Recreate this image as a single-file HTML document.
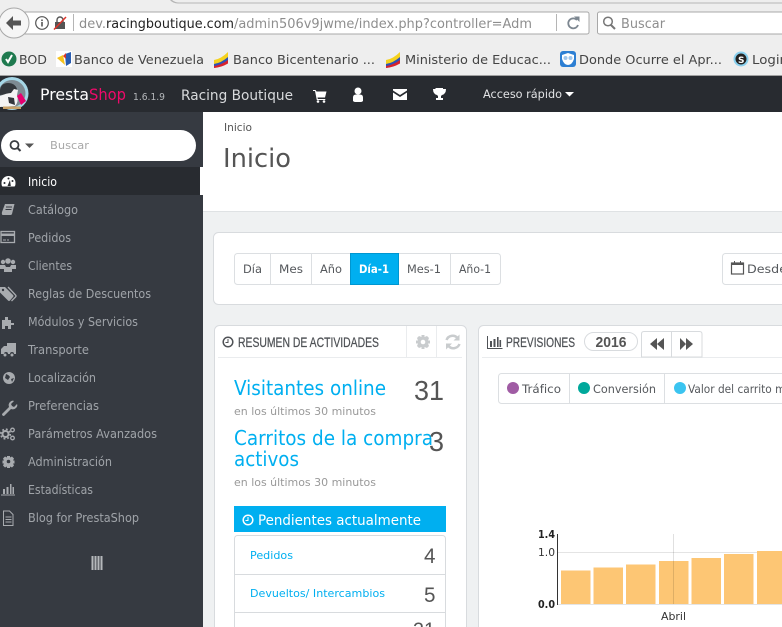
<!DOCTYPE html>
<html lang="es"><head><meta charset="utf-8"><title>Racing Boutique</title>
<style>
html,body{margin:0;padding:0;background:#eff1f2;width:782px;height:627px;overflow:hidden}
svg{display:block}
text{font-family:"DejaVu Sans",sans-serif;white-space:pre}
.m{font-size:12px;fill:#a0a4a9}
.b{font-size:11.5px;fill:#55585c}
.g{font-size:11px;fill:#999}
.h{font-family:"Liberation Sans",sans-serif;font-size:14px;fill:#4f5256;stroke:#4f5256;stroke-width:.25px}
.n{font-family:"Liberation Sans",sans-serif;fill:#555}
.bl{fill:#00aff0}
.i{fill:#a8abaf}
</style></head><body>
<svg width="782" height="627" viewBox="0 0 782 627" xmlns="http://www.w3.org/2000/svg">
<!-- browser chrome -->
<rect width="782" height="76" fill="#eeeeee"/>
<path d="M172 0q3 2.500 7 2.500H782v1H178q-5 0-8-3.500z" fill="#b5b5b5"/>
<rect x="20" y="12" width="569" height="22" rx="2" fill="#fff" stroke="#a8a8a8"/>
<circle cx="14" cy="23" r="15" fill="#f6f6f6" stroke="#a8a8a8"/>
<path d="M6 23l7-7v4.500h8v5h-8v4.500z" fill="#555"/>
<circle cx="42" cy="23" r="6.300" fill="none" stroke="#555" stroke-width="1.200"/><rect x="41.200" y="22" width="1.600" height="4.500" fill="#555"/><rect x="41.200" y="19.500" width="1.600" height="1.600" fill="#555"/>
<rect x="55" y="22" width="10" height="7" fill="#555"/><path d="M57 22v-2a3 3 0 0 1 6 0v2" fill="none" stroke="#555" stroke-width="1.400"/><path d="M54 29.500L66 17" stroke="#e0352b" stroke-width="1.500"/>
<rect x="73" y="14" width="1" height="17" fill="#b5b5b5"/>
<text x="79" y="28" font-size="13.500" fill="#8e8e8e" textLength="27" lengthAdjust="spacingAndGlyphs">dev.</text>
<text x="106" y="28" font-size="13.500" fill="#222" textLength="128" lengthAdjust="spacingAndGlyphs">racingboutique.com</text>
<text x="234" y="28" font-size="13.500" fill="#8e8e8e" textLength="298" lengthAdjust="spacingAndGlyphs">/admin506v9jwme/index.php?controller=Adm</text>
<rect x="556" y="14" width="1" height="17" fill="#b5b5b5"/>
<path d="M577 20a5 5 0 1 0 1 5" fill="none" stroke="#7d8791" stroke-width="1.800"/><path d="M574 16.500h5.500v5.500z" fill="#7d8791"/>
<rect x="597.500" y="12" width="190" height="22" rx="2" fill="#fff" stroke="#a8a8a8"/>
<circle cx="608" cy="21.500" r="4.300" fill="none" stroke="#777" stroke-width="1.500"/><path d="M611 25l4 4" stroke="#777" stroke-width="2"/>
<text x="621" y="28" font-size="13.500" fill="#8e8e8e" textLength="44" lengthAdjust="spacingAndGlyphs">Buscar</text>
<!-- bookmarks -->
<circle cx="9" cy="59" r="7.500" fill="#1f7a4f"/><path d="M6 59l2 3 4-7" fill="none" stroke="#fff" stroke-width="2"/>
<text x="19" y="64" font-size="12.500" fill="#444" textLength="28" lengthAdjust="spacingAndGlyphs">BOD</text>
<rect x="56" y="51" width="16" height="16" fill="#fff"/><path d="M57 58l6-3 2 10z" fill="#f6c21c"/><path d="M65 54l6-2v11l-5 3z" fill="#2a5db0"/><path d="M63 56l3-3v6z" fill="#d9352b"/>
<text x="74" y="64" font-size="12.500" fill="#444" textLength="130" lengthAdjust="spacingAndGlyphs">Banco de Venezuela</text>
<g id="f"><path d="M214 60q7-1 14-8v5.500q-7 6-14 7.500z" fill="#f5d21e"/><path d="M214 64q7-1 14-7v4q-7 6-14 7z" fill="#2d52b8"/><path d="M214 66q7-1 14-6v3.500q-7 4-14 4.500z" fill="#d8222c"/></g>
<text x="233" y="64" font-size="12.500" fill="#444" textLength="142" lengthAdjust="spacingAndGlyphs">Banco Bicentenario ...</text>
<use href="#f" x="172"/>
<text x="405" y="64" font-size="12.500" fill="#444" textLength="146" lengthAdjust="spacingAndGlyphs">Ministerio de Educac...</text>
<rect x="560" y="51" width="16" height="16" rx="3" fill="#2d7fd3"/><path d="M562 55l6-2 6 2v4q-2 6-6 6t-6-6z" fill="#fff"/><circle cx="565.500" cy="58" r="2" fill="#9fc6ec"/><circle cx="570.500" cy="58" r="2" fill="#9fc6ec"/>
<text x="579" y="64" font-size="12.500" fill="#444" textLength="143" lengthAdjust="spacingAndGlyphs">Donde Ocurre el Apr...</text>
<circle cx="741" cy="59" r="7.500" fill="#8ad0ee"/><circle cx="741" cy="59" r="5.500" fill="#222"/><text x="738" y="63" font-size="9" font-weight="bold" fill="#fff">S</text>
<text x="752" y="64" font-size="12.500" fill="#444" textLength="36" lengthAdjust="spacingAndGlyphs">Login</text>
<rect y="75" width="782" height="1" fill="#a0a0a0"/>
<!-- header -->
<rect y="76" width="782" height="36" fill="#282b30"/>
<circle cx="12" cy="93.500" r="16.500" fill="#a5d6e6"/><circle cx="12" cy="93.500" r="13.500" fill="#7d8a92"/>
<path d="M0 90q1-7 8-7t9 6l-3 5-14 1z" fill="#33373c"/>
<path d="M0 96q7-3 11-3l3-4 4 1-1 5q2 7-2 11l-15 1z" fill="#f4f4f4"/><path d="M8 97l6 1 1 7-6-2z" fill="#33373c"/><path d="M17 96l4-3 5 8-5 4z" fill="#e6006f"/><rect x="3" y="106.500" width="18" height="2.500" fill="#c9a36a"/>
<text x="40" y="100" font-size="16" fill="#fff" textLength="49" lengthAdjust="spacingAndGlyphs">Presta</text>
<text x="89" y="100" font-size="16" fill="#ef0a6a" textLength="37" lengthAdjust="spacingAndGlyphs">Shop</text>
<text x="133" y="100" font-size="10" fill="#b5b8bb" textLength="32" lengthAdjust="spacingAndGlyphs">1.6.1.9</text>
<text x="181" y="100" font-size="14" fill="#d8dadc" textLength="112" lengthAdjust="spacingAndGlyphs">Racing Boutique</text>
<path d="M313 90h2.500l1 1.500h10l-1.500 6h-7.500l.3 1.500h7.500v1h-8.500l-1.800-9h-2z" fill="#fff"/><circle cx="318" cy="101.500" r="1.300" fill="#fff"/><circle cx="324" cy="101.500" r="1.300" fill="#fff"/>
<circle cx="358" cy="91" r="3.500" fill="#fff"/><path d="M353 101v-3.500q0-3 3-3h4q3 0 3 3v3.500q-1 1-2 1h-6q-1 0-2-1z" fill="#fff"/>
<path d="M393 89h14v1.500l-7 4.500-7-4.500zM393 92.500l7 4.500 7-4.500v7.500h-14z" fill="#fff"/>
<path d="M435 88h8v1h3q0 5-4 6l-1 1v2h2v2h-7v-2h2v-2l-1-1q-4-1-4-6h3z" fill="#fff"/>
<text x="483" y="98" font-size="11.500" fill="#e2e3e5" textLength="79" lengthAdjust="spacingAndGlyphs">Acceso rápido</text>
<path d="M565 92h9l-4.500 4.500z" fill="#fff"/>
<!-- content -->
<rect x="203" y="112" width="579" height="99" fill="#fff"/><rect x="203" y="211" width="579" height="1" fill="#dfe2e4"/>
<text x="224" y="131" font-size="11" fill="#555" textLength="28" lengthAdjust="spacingAndGlyphs">Inicio</text>
<text x="223" y="167" font-size="26" fill="#555" textLength="68" lengthAdjust="spacingAndGlyphs">Inicio</text>
<!-- sidebar -->
<rect y="112" width="203" height="515" fill="#363a41"/>
<rect x="1" y="130" width="195" height="31" rx="15.500" fill="#fff"/>
<circle cx="14.500" cy="145" r="4" fill="none" stroke="#3a3d42" stroke-width="1.800"/><path d="M17.500 148l3 3" stroke="#3a3d42" stroke-width="2"/>
<path d="M25 143.500h9l-4.500 4.500z" fill="#555"/>
<text x="50" y="149" font-size="11" fill="#a8a8a8" textLength="39" lengthAdjust="spacingAndGlyphs">Buscar</text>
<rect y="167" width="200" height="28" fill="#282b30"/><rect x="200" y="167" width="3" height="28" fill="#fff"/>
<text class="m" x="28" y="186" style="fill:#fff" textLength="29" lengthAdjust="spacingAndGlyphs">Inicio</text>
<text class="m" x="28" y="214" textLength="50" lengthAdjust="spacingAndGlyphs">Catálogo</text>
<text class="m" x="28" y="242" textLength="43" lengthAdjust="spacingAndGlyphs">Pedidos</text>
<text class="m" x="28" y="270" textLength="44" lengthAdjust="spacingAndGlyphs">Clientes</text>
<text class="m" x="28" y="298" textLength="123" lengthAdjust="spacingAndGlyphs">Reglas de Descuentos</text>
<text class="m" x="28" y="326" textLength="110" lengthAdjust="spacingAndGlyphs">Módulos y Servicios</text>
<text class="m" x="28" y="354" textLength="61" lengthAdjust="spacingAndGlyphs">Transporte</text>
<text class="m" x="28" y="382" textLength="68" lengthAdjust="spacingAndGlyphs">Localización</text>
<text class="m" x="28" y="410" textLength="71" lengthAdjust="spacingAndGlyphs">Preferencias</text>
<text class="m" x="28" y="438" textLength="129" lengthAdjust="spacingAndGlyphs">Parámetros Avanzados</text>
<text class="m" x="28" y="466" textLength="84" lengthAdjust="spacingAndGlyphs">Administración</text>
<text class="m" x="28" y="494" textLength="65" lengthAdjust="spacingAndGlyphs">Estadísticas</text>
<text class="m" x="28" y="522" textLength="111" lengthAdjust="spacingAndGlyphs">Blog for PrestaShop</text>
<!-- sidebar icons -->
<path d="M1.500 183a7 7 0 1 1 14 0q0 3-1 3.500h-12q-1-.5-1-3.500z" fill="#fff"/><path d="M7.500 186l2.500-6 .8 6z" fill="#282b30"/><circle cx="4.500" cy="183" r="1" fill="#282b30"/><circle cx="8.500" cy="178.500" r="1" fill="#282b30"/><circle cx="12.500" cy="181" r="1" fill="#282b30"/>
<path class="i" d="M5 204h9.500l-2.500 10q-.3 1-1.500 1h-8q-1-1-.5-3z"/><path d="M6 207h6M5.500 209.500h6" stroke="#363a41"/>
<rect x="1" y="231.500" width="13.500" height="11" fill="none" stroke="#a8abaf" stroke-width="1.300"/><rect x="1" y="233.500" width="14" height="2.500" fill="#a8abaf"/><path d="M3 240h3M7 240h2" stroke="#a8abaf"/>
<circle cx="8" cy="261" r="2.800" class="i"/><circle cx="3" cy="262" r="2.200" class="i"/><circle cx="13" cy="262" r="2.200" class="i"/><path class="i" d="M0 265h5l1 2h4l1-2h5v4h-4v3h-8v-3h-4z"/>
<path class="i" d="M0 287h5l8 8q1 1 0 2l-3 3.500q-1 1-2 0l-8-8z"/><path d="M8 287l7.500 8q1 1 0 2l-4 4" stroke="#a8abaf" fill="none" stroke-width="1.300"/><circle cx="3" cy="290" r="1.200" fill="#363a41"/>
<path class="i" d="M2 320h3v-3h3v3h3v3h3v2h-3v4h-3v-3h-3v3h-3z"/>
<path class="i" d="M1 349l3-3h3v-3h9v11h-2a2 2 0 0 0-4 0h-2a2 2 0 0 0-4 0h-3z"/><circle cx="5" cy="355" r="1.500" class="i"/><circle cx="12" cy="355" r="1.500" class="i"/>
<circle cx="9" cy="378" r="6" class="i"/><path d="M6 374q3 1 4 3l-2 3-3-2zM11 379l3-1-2 4z" fill="#363a41"/>
<path class="i" d="M2 414l7-7q-1-3 1-5t4-1l-3 3 1 2 2 1 3-3q1 2-1 4t-5 1l-7 7q-2 0-2-2z"/>
<circle cx="5.500" cy="434" r="3" fill="none" stroke="#a8abaf" stroke-width="2"/><circle cx="5.500" cy="434" r="4.800" fill="none" stroke="#a8abaf" stroke-width="1.600" stroke-dasharray="1.900 1.900"/>
<circle cx="12.500" cy="430" r="1.800" fill="none" stroke="#a8abaf" stroke-width="1.300"/><circle cx="12.500" cy="438" r="1.800" fill="none" stroke="#a8abaf" stroke-width="1.300"/>
<path class="i" d="M7 456h3v1.500l2-1 2 2-1 2h1.500v3H13l1 2-2 2-2-1v1.500H7v-1.500l-2 1-2-2 1-2H2.500v-3H4l-1-2 2-2 2 1z"/><circle cx="8.500" cy="461.500" r="1.800" fill="#363a41"/>
<path d="M1 495h14" stroke="#a8abaf"/><path d="M3 489v5h2v-5zM6.500 487v7h2v-7zM10 484v10h1.500v-10zM12.500 487v7h1.500v-7z" class="i"/>
<path d="M3.500 511h6l3.500 3.500v11h-9.500z" fill="none" stroke="#a8abaf"/><path d="M5.500 517h6M5.500 519.500h6M5.500 522h6" stroke="#a8abaf"/>
<path d="M92.500 556v14M95.500 556v14M98.500 556v14M101.500 556v14" stroke="#b5b8bb" stroke-width="2"/>
<!-- range panel -->
<rect x="213.500" y="232.500" width="580" height="72" rx="5" fill="#fff" stroke="#d8dbde"/>
<rect x="234.500" y="253.500" width="266" height="31" rx="3" fill="#fff" stroke="#dcdfe2"/>
<path d="M270.500 254v30M311.500 254v30M450.500 254v30" stroke="#dcdfe2"/>
<rect x="350.500" y="253.500" width="48" height="31" fill="#00aff0" stroke="#0096d0"/>
<text class="b" x="243" y="273" textLength="19" lengthAdjust="spacingAndGlyphs">Día</text>
<text class="b" x="279" y="273" textLength="24" lengthAdjust="spacingAndGlyphs">Mes</text>
<text class="b" x="320" y="273" textLength="22" lengthAdjust="spacingAndGlyphs">Año</text>
<text x="359" y="273" font-size="11.500" font-weight="bold" fill="#fff" textLength="30" lengthAdjust="spacingAndGlyphs">Día-1</text>
<text class="b" x="407" y="273" textLength="34" lengthAdjust="spacingAndGlyphs">Mes-1</text>
<text class="b" x="459" y="273" textLength="32" lengthAdjust="spacingAndGlyphs">Año-1</text>
<rect x="722.500" y="253.500" width="80" height="31" rx="3" fill="#fff" stroke="#dcdfe2"/>
<rect x="731.500" y="263" width="12" height="11" fill="none" stroke="#555" stroke-width="1.200"/><rect x="731.500" y="263" width="12" height="2" fill="#555"/><path d="M734.500 261v3M740.500 261v3" stroke="#555"/>
<text class="b" x="747" y="273" textLength="40" lengthAdjust="spacingAndGlyphs">Desde</text>
<!-- activity panel -->
<rect x="214.500" y="325.500" width="252" height="330" rx="5" fill="#fff" stroke="#d8dbde"/>
<rect x="218" y="357" width="244" height="1" fill="#eaecee"/>
<path d="M406.500 326v31M436.500 326v31" stroke="#eaecee"/>
<circle cx="228" cy="342" r="4.800" fill="none" stroke="#4f5256" stroke-width="1.500"/><path d="M228 339v3.500h-2.500" fill="none" stroke="#4f5256"/>
<text class="h" x="238" y="347" textLength="141" lengthAdjust="spacingAndGlyphs">RESUMEN DE ACTIVIDADES</text>
<g transform="translate(414.500,335)" fill="#c9ccce"><path d="M7 0h3v2l2.500-1 2 2-1 2.500h2v3h-2l1 2.500-2 2-2.500-1v2h-3v-2l-2.500 1-2-2 1-2.500h-2v-3h2l-1-2.500 2-2 2.500 1z"/><circle cx="8.500" cy="7" r="2.300" fill="#fff"/></g>
<path d="M446.500 340a6.500 6.500 0 0 1 11-2M459.500 344a6.500 6.500 0 0 1-11 2" fill="none" stroke="#c9ccce" stroke-width="2.500"/><path d="M459.500 334.500v6h-6zM446 349.500v-6h6z" fill="#c9ccce"/>
<text class="bl" x="234" y="395" font-size="20" textLength="152" lengthAdjust="spacingAndGlyphs">Visitantes online</text>
<text class="n" x="414" y="400" font-size="28" textLength="30" lengthAdjust="spacingAndGlyphs">31</text>
<text class="g" x="234" y="415" textLength="142" lengthAdjust="spacingAndGlyphs">en los últimos 30 minutos</text>
<text class="bl" x="234" y="445" font-size="20" textLength="199" lengthAdjust="spacingAndGlyphs">Carritos de la compra</text>
<text class="n" x="429" y="451" font-size="28" textLength="15" lengthAdjust="spacingAndGlyphs">3</text>
<text class="bl" x="234" y="466" font-size="20" textLength="65" lengthAdjust="spacingAndGlyphs">activos</text>
<text class="g" x="234" y="486" textLength="142" lengthAdjust="spacingAndGlyphs">en los últimos 30 minutos</text>
<rect x="234" y="506" width="212" height="26" fill="#00aff0"/>
<circle cx="248" cy="520" r="4.800" fill="none" stroke="#fff" stroke-width="1.500"/><path d="M248 517v3.500h-2.500" fill="none" stroke="#fff"/>
<text x="258" y="525" font-size="14" fill="#fff" textLength="163" lengthAdjust="spacingAndGlyphs">Pendientes actualmente</text>
<rect x="234.500" y="535.500" width="211" height="110" rx="3" fill="#fff" stroke="#d8dbde"/>
<path d="M235 574.500h210M235 612.500h210" stroke="#d8dbde"/>
<text class="bl" x="250" y="559" font-size="11" textLength="43" lengthAdjust="spacingAndGlyphs">Pedidos</text>
<text class="n" x="424" y="563" font-size="21" textLength="11.500" lengthAdjust="spacingAndGlyphs">4</text>
<text class="bl" x="250" y="597" font-size="11" textLength="135" lengthAdjust="spacingAndGlyphs">Devueltos/ Intercambios</text>
<text class="n" x="424" y="602" font-size="21" textLength="11.500" lengthAdjust="spacingAndGlyphs">5</text>
<text class="n" x="413" y="637" font-size="21" textLength="22" lengthAdjust="spacingAndGlyphs">31</text>
<!-- forecast panel -->
<rect x="478.500" y="325.500" width="320" height="330" rx="5" fill="#fff" stroke="#d8dbde"/>
<rect x="482" y="357" width="300" height="1" fill="#eaecee"/>
<path d="M487.500 336v12.500h15" fill="none" stroke="#4f5256"/><path d="M490 341v6h2v-6zM493.500 339v8h2v-8zM497 337v10h1.600v-10zM499.500 340v7h1.600v-7z" fill="#4f5256"/>
<text class="h" x="506" y="347" textLength="69" lengthAdjust="spacingAndGlyphs">PREVISIONES</text>
<rect x="584.500" y="332.500" width="53" height="18" rx="9" fill="#fff" stroke="#d8dbde"/>
<text class="n" x="595.500" y="347" font-size="15" font-weight="bold" textLength="31" lengthAdjust="spacingAndGlyphs">2016</text>
<path d="M641.500 357v-23q0-2.500 2.500-2.500h55.500q2.500 0 2.500 2.500v23z" fill="#fff" stroke="#d8dbde"/><path d="M671.500 332v25" stroke="#d8dbde"/>
<path d="M650 344l7-6v12zM657 344l7-6v12z" fill="#555"/><path d="M680 338l6 6-6 6zM686 338l7 6-7 6z" fill="#555"/>
<rect x="498.500" y="373.500" width="320" height="30" rx="3" fill="#fff" stroke="#dcdfe2"/>
<path d="M569.500 374v29M664.500 374v29" stroke="#dcdfe2"/>
<circle cx="513" cy="388" r="6" fill="#a05ca4"/><circle cx="584" cy="388" r="6" fill="#00a89b"/><circle cx="680" cy="388" r="6" fill="#3bc4f0"/>
<text class="b" x="522" y="393" textLength="39" lengthAdjust="spacingAndGlyphs">Tráfico</text>
<text class="b" x="593" y="393" textLength="63" lengthAdjust="spacingAndGlyphs">Conversión</text>
<text class="b" x="688" y="393" textLength="120" lengthAdjust="spacingAndGlyphs">Valor del carrito medio</text>
<!-- chart -->
<rect x="558" y="552" width="224" height="1" fill="#e4e4e4"/>
<g fill="#fdc674">
<rect x="561" y="570.500" width="29.500" height="33.500"/><rect x="593.500" y="567.500" width="29.500" height="36.500"/><rect x="626" y="564.500" width="29.500" height="39.500"/><rect x="659" y="561" width="29.500" height="43"/><rect x="691.500" y="558" width="29.500" height="46"/><rect x="724" y="554" width="29.500" height="50"/><rect x="757" y="551" width="25" height="53"/>
</g>
<path d="M673.500 534v70" stroke="#000" stroke-opacity=".12"/>
<rect x="558" y="604" width="224" height="1" fill="#e4e4e4"/>
<rect x="557" y="534" width="1" height="71" fill="#333"/>
<text x="538" y="538" font-size="11" font-weight="bold" fill="#222" textLength="17" lengthAdjust="spacingAndGlyphs">1.4</text>
<text x="538" y="556" font-size="11" fill="#333" textLength="17" lengthAdjust="spacingAndGlyphs">1.0</text>
<text x="538" y="608" font-size="11" font-weight="bold" fill="#222" textLength="17" lengthAdjust="spacingAndGlyphs">0.0</text>
<text x="661" y="620" font-size="11" fill="#333" textLength="25" lengthAdjust="spacingAndGlyphs">Abril</text>
</svg>
</body></html>
